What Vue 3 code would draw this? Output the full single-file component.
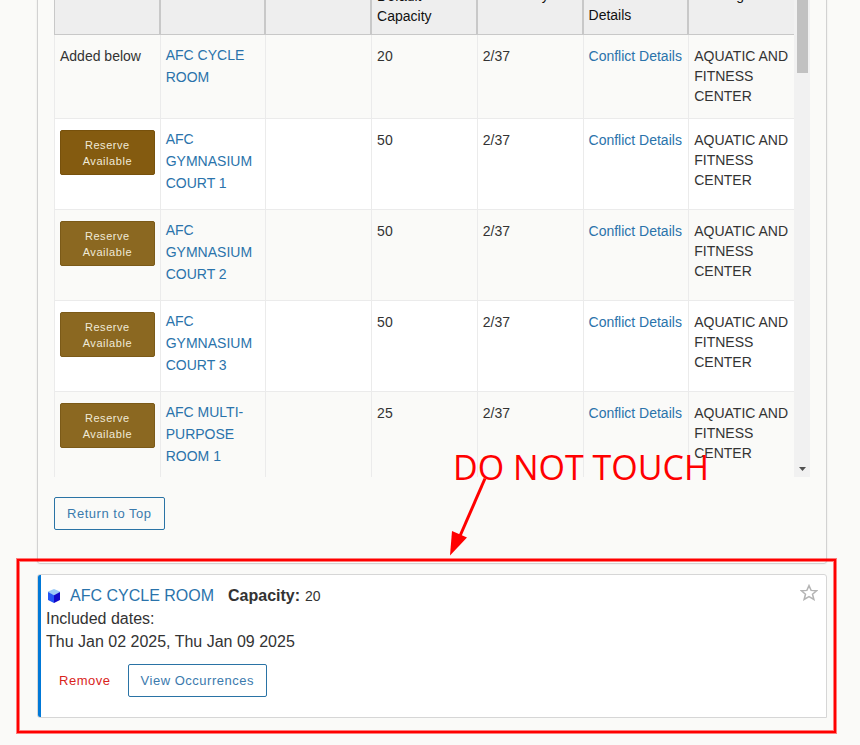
<script setup>
const headers = [
  { title: '' },
  { title: '' },
  { title: '' },
  { title: 'Default Capacity' },
  { title: 'Availability', sortable: true },
  { title: 'Conflict Details', sortable: true },
  { title: 'Building', sortable: true },
]

const building = 'AQUATIC AND FITNESS CENTER'
const rooms = [
  { name: 'AFC CYCLE ROOM', capacity: 20, added: true },
  { name: 'AFC GYMNASIUM COURT 1', capacity: 50, active: true },
  { name: 'AFC GYMNASIUM COURT 2', capacity: 50 },
  { name: 'AFC GYMNASIUM COURT 3', capacity: 50 },
  { name: 'AFC MULTI-PURPOSE ROOM 1', capacity: 25 },
]
</script>

<template>
  <main class="page">
    <section class="panel">
      <div class="results">
        <div class="viewport">
          <table class="rooms">
            <thead>
              <tr>
                <th v-for="(header, i) in headers" :key="i" scope="col" :class="{ sortable: header.sortable }">
                  {{ header.title }}
                </th>
              </tr>
            </thead>
            <tbody>
              <tr v-for="room in rooms" :key="room.name">
                <td>
                  <template v-if="room.added">Added below</template>
                  <button v-else type="button" class="reserve" :class="{ active: room.active }">
                    Reserve Available
                  </button>
                </td>
                <td class="name"><a href="#">{{ room.name }}</a></td>
                <td></td>
                <td>{{ room.capacity }}</td>
                <td>2/37</td>
                <td class="conflict"><a href="#">Conflict Details</a></td>
                <td>{{ building }}</td>
              </tr>
            </tbody>
          </table>
        </div>
        <div class="scrollbar">
          <div class="thumb"></div>
          <svg class="down" viewBox="0 0 7 4" width="7" height="4"><path d="M0 0H7L3.5 4Z" fill="#505050" /></svg>
        </div>
      </div>
      <button type="button" class="btn outline">Return to Top</button>
    </section>

    <div class="selection">
      <article class="card">
        <div class="details">
          <div class="title">
            <svg class="cube" viewBox="0 0 12 14" width="12" height="14">
              <path d="M6 0L12 2.6V3.4L6 6.5L0 3.4V2.6Z" fill="#9ccbf7" />
              <path d="M0 3L6 6.2V14L0 11Z" fill="#2456f5" />
              <path d="M12 3L6 6.2V14L12 11Z" fill="#1208c8" />
            </svg>
            <a href="#">AFC CYCLE ROOM</a>
            <strong>Capacity:</strong>
            <span class="count">20</span>
          </div>
          <div>Included dates:</div>
          <div>Thu Jan 02 2025, Thu Jan 09 2025</div>
          <div class="actions">
            <button type="button" class="btn danger">Remove</button>
            <button type="button" class="btn outline">View Occurrences</button>
          </div>
        </div>
        <button type="button" class="star" aria-label="Add to favorites">
          <svg viewBox="0 0 18 17" width="18" height="17">
            <path d="M9 1.6L11.1 6.4L16.6 6.7L12.5 10.3L13.9 15.5L9 12.7L4.1 15.5L5.5 10.3L1.4 6.7L6.9 6.4Z" fill="#fff" stroke="#b4b4b4" stroke-width="1.5" />
          </svg>
        </button>
      </article>
      <div class="frame"></div>
      <div class="note">DO NOT TOUCH</div>
      <svg class="arrow" viewBox="0 0 40 80" width="40" height="80">
        <path d="M36 2.5L11 60" stroke="#f00" stroke-width="3" />
        <path d="M1 79.5L3 55L18 61.5Z" fill="#f00" />
      </svg>
    </div>
  </main>
</template>

<style>
body {
  background: #fafaf8;
}
</style>

<style scoped>
.page {
  overflow: hidden;
  padding: 0 33px 27px 37px;
  font: 14px/20px "Liberation Sans", Arial, sans-serif;
  color: #333;
}
a {
  color: #2a73ab;
  text-decoration: none;
}
button {
  font-family: inherit;
  cursor: pointer;
}
.panel {
  margin-top: -41px;
  padding: 15px 16px 33px;
  border: 1px solid #d2d2d2;
  border-radius: 3px;
  box-shadow: 0 0 2px #0000001a;
}
.results {
  display: flex;
  height: 502px;
  margin-bottom: 20px;
}
.viewport {
  flex: 1;
  overflow: hidden;
}
.rooms {
  width: 100%;
  table-layout: fixed;
  border-collapse: separate;
  border-spacing: 0;
}
th {
  padding: 10px 5px 8px;
  border: 1px solid #c8c8c8;
  background: #eee;
  color: #111;
  font-weight: 400;
  text-align: left;
  vertical-align: top;
}
th.sortable {
  padding: 9px 12px 9px 5px;
}
th:last-child {
  border-right: 0;
}
td {
  padding: 11px 5px 12px;
  border-left: 1px solid #ebebeb;
  border-bottom: 1px solid #ebebeb;
  vertical-align: top;
}
tbody tr:nth-child(even) {
  background: #fff;
}
.name {
  padding: 9px 5px 15px;
  line-height: 22px;
}
.conflict {
  white-space: nowrap;
}
.reserve {
  display: block;
  width: 100%;
  padding: 6px 12px 5px;
  border: 1px solid #7b5a18;
  border-radius: 2px;
  background: #8b6821;
  color: #f0ead8;
  font-size: 11px;
  line-height: 16px;
  letter-spacing: 0.05em;
}
.reserve.active {
  background: #845b10;
  border-color: #77510c;
}
.scrollbar {
  display: flex;
  flex-direction: column;
  justify-content: space-between;
  align-items: center;
  width: 16px;
  padding-bottom: 6px;
  box-sizing: border-box;
  background: #f1f1f1;
}
.thumb {
  width: 11px;
  height: 98px;
  background: #c1c1c1;
}
.down {
  display: block;
}
.btn {
  height: 33px;
  padding: 0 12px;
  border: 1px solid transparent;
  border-radius: 2px;
  background: transparent;
  font-size: 13px;
  line-height: 20px;
  letter-spacing: 0.04em;
}
.outline {
  border-color: #2a73a5;
  color: #3b7aad;
}
.danger {
  color: #d9241c;
}
.selection {
  position: relative;
  margin-top: 10px;
}
.card {
  display: flex;
  justify-content: space-between;
  align-items: flex-start;
  border: 1px solid #d6d6d6;
  border-radius: 3px 3px 0 3px;
  background: #fff;
}
.details {
  padding: 9px 5px 20px;
  border-left: 3px solid #0078d7;
  border-radius: 2px 0 0 2px;
  font-size: 16px;
  line-height: 23px;
}
.title {
  display: flex;
  align-items: baseline;
  height: 23px;
}
.cube {
  align-self: center;
  margin: 0 10px 0 2px;
}
.title strong {
  margin: 0 5px 0 14px;
}
.count {
  font-size: 14px;
}
.actions {
  display: flex;
  gap: 4px;
  margin-top: 11px;
}
.star {
  margin: 9px 8px 0 0;
  padding: 0;
  border: 0;
  background: none;
}
.star svg {
  display: block;
}
.frame,
.note,
.arrow {
  position: absolute;
  pointer-events: none;
}
.frame {
  inset: -15px -9px -15px -20px;
  border: 2px solid #f00;
  box-shadow: 0 0 0 1px #ff000080, inset 0 0 0 1px #ff000080;
}
.note {
  left: 416px;
  top: -131px;
  color: #f00;
  font: 400 34px/48px "Open Sans", "Noto Sans", sans-serif;
  white-space: nowrap;
}
.arrow {
  left: 412px;
  top: -98px;
}
</style>
